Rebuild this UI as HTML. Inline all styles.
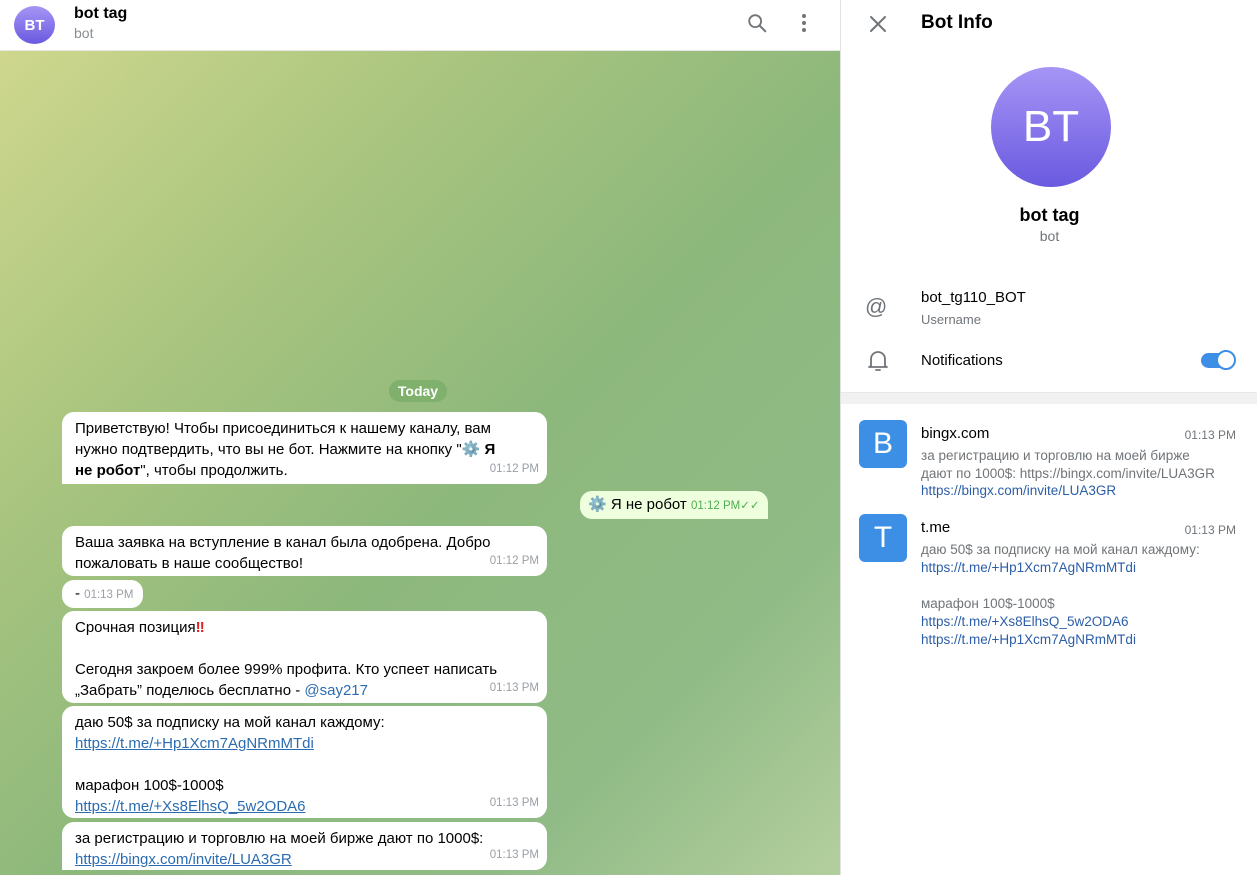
<!DOCTYPE html>
<html><head><meta charset="utf-8"><style>
*{margin:0;padding:0;box-sizing:border-box}
body{width:1257px;height:875px;overflow:hidden;font-family:"Liberation Sans","DejaVu Sans",sans-serif;position:relative;background:#fff;color:#000}
.chat{position:absolute;left:0;top:0;width:840px;height:875px;background:linear-gradient(135deg,#d3d98f 0%,#a9c57f 30%,#8db87c 55%,#90bb86 80%,#b4cf9e 100%);overflow:hidden}
.hdr{position:absolute;left:0;top:0;width:840px;height:51px;background:#fff;border-bottom:1px solid #e6e6e6}
.av{position:absolute;border-radius:50%;background:linear-gradient(#a695f5,#6a5ae0);color:#fff;font-weight:bold;display:flex;align-items:center;justify-content:center}
.b{position:absolute;left:62px;width:485px;background:#fff;border-radius:12px;padding:6px 22px 6px 13px;font-size:15px;line-height:21px}
.t{position:absolute;right:8px;bottom:4px;font-size:11.5px;color:#9aa0a6}
a{color:#2b6cb0;text-decoration:underline}
.rp{position:absolute;left:840px;top:0;width:417px;height:875px;background:#fff;border-left:1px solid #e2e2e2}
.g{color:#707579}
.lk{color:#2c5ea8}
</style></head><body>
<div class="chat">
<div class="hdr">
 <div class="av" style="left:14px;top:6px;width:41px;height:38px;font-size:15px">BT</div>
 <div style="position:absolute;left:74px;top:5px;font-size:16px;font-weight:bold">bot tag</div>
 <div style="position:absolute;left:74px;top:25px;font-size:14px;color:#8a8f93">bot</div>
 <svg style="position:absolute;left:746px;top:12px" width="22" height="22" viewBox="0 0 24 24"><circle cx="10" cy="10" r="6.5" fill="none" stroke="#707579" stroke-width="2"/><path d="M15 15l6 6" stroke="#707579" stroke-width="2.2" stroke-linecap="round"/></svg>
 <svg style="position:absolute;left:800px;top:12px" width="8" height="22" viewBox="0 0 8 22"><circle cx="4" cy="4" r="2" fill="#707579"/><circle cx="4" cy="11" r="2" fill="#707579"/><circle cx="4" cy="18" r="2" fill="#707579"/></svg>
</div>
<div style="position:absolute;left:389px;top:380px;width:58px;height:22px;border-radius:11px;background:#7fb06c;color:#fff;font-size:14px;font-weight:bold;text-align:center;line-height:22px">Today</div>

<div class="b" style="top:412px;height:72px;border-bottom-left-radius:0;padding-right:48px">Приветствую! Чтобы присоединиться к нашему каналу, вам нужно подтвердить, что вы не бот. Нажмите на кнопку "⚙️ <b>Я не робот</b>", чтобы продолжить.<span class="t">01:12 PM</span></div>

<div class="b" style="left:580px;width:188px;top:491px;height:28px;padding:3px 8px;background:#eeffde;border-bottom-right-radius:0">⚙️ Я не робот <span style="font-size:11.5px;color:#4fae4e">01:12 PM✓✓</span></div>

<div class="b" style="top:526px;height:50px">Ваша заявка на вступление в канал была одобрена. Добро пожаловать в наше сообщество!<span class="t">01:12 PM</span></div>

<div class="b" style="top:580px;width:81px;height:28px;padding:3px 8px 3px 13px">- <span style="font-size:11.5px;color:#9aa0a6">01:13 PM</span></div>

<div class="b" style="top:611px;height:92px">Срочная позиция<span style="color:#e02020;font-weight:bold">‼</span><br><br>Сегодня закроем более 999% профита. Кто успеет написать „Забрать” поделюсь бесплатно - <span style="color:#2b6cb0">@say217</span><span class="t">01:13 PM</span></div>

<div class="b" style="top:706px;height:112px">даю 50$ за подписку на мой канал каждому:<br><a>https://t.me/+Hp1Xcm7AgNRmMTdi</a><br><br>марафон 100$-1000$<br><a>https://t.me/+Xs8ElhsQ_5w2ODA6</a><span class="t">01:13 PM</span></div>

<div class="b" style="top:822px;height:48px;border-bottom-left-radius:0">за регистрацию и торговлю на моей бирже дают по 1000$:<br><a>https://bingx.com/invite/LUA3GR</a><span class="t">01:13 PM</span></div>
</div>

<div class="rp">
 <svg style="position:absolute;left:28px;top:15px" width="18" height="18" viewBox="0 0 18 18"><path d="M2 2L16 16M16 2L2 16" stroke="#707579" stroke-width="2" stroke-linecap="round"/></svg>
 <div style="position:absolute;left:80px;top:12px;font-size:19px;font-weight:bold">Bot Info</div>
 <div class="av" style="left:150px;top:67px;width:120px;height:120px;font-size:44px;font-weight:normal">BT</div>
 <div style="position:absolute;left:0;width:417px;top:205px;text-align:center;font-size:18px;font-weight:bold">bot tag</div>
 <div class="g" style="position:absolute;left:0;width:417px;top:228px;text-align:center;font-size:14px">bot</div>
 <div class="g" style="position:absolute;left:24px;top:294px;font-size:22px">@</div>
 <div style="position:absolute;left:80px;top:289px;font-size:15px">bot_tg110_BOT</div>
 <div class="g" style="position:absolute;left:80px;top:312px;font-size:13px">Username</div>
 <svg style="position:absolute;left:26px;top:349px" width="22" height="23" viewBox="0 0 22 23"><path d="M4 17V10a7 7 0 0 1 14 0v7l2 1H2z" fill="none" stroke="#707579" stroke-width="1.8" stroke-linejoin="round"/><path d="M9 21h4" stroke="#707579" stroke-width="1.8" stroke-linecap="round"/></svg>
 <div style="position:absolute;left:80px;top:352px;font-size:15px">Notifications</div>
 <div style="position:absolute;left:360px;top:353px;width:32px;height:15px;border-radius:8px;background:#3d8fe6"></div>
 <div style="position:absolute;left:375px;top:350px;width:20px;height:20px;border-radius:50%;background:#fff;border:2px solid #3d8fe6"></div>
 <div style="position:absolute;left:0;top:392px;width:417px;height:12px;background:#f1f1f1;border-top:1px solid #e8e8e8"></div>

 <div style="position:absolute;left:18px;top:420px;width:48px;height:48px;border-radius:6px;background:#3d8fe6;color:#fff;font-size:30px;text-align:center;line-height:48px">B</div>
 <div style="position:absolute;left:80px;top:425px;font-size:15px">bingx.com</div>
 <div class="g" style="position:absolute;right:21px;top:428px;font-size:12px">01:13 PM</div>
 <div style="position:absolute;left:80px;top:447px;font-size:13.5px;line-height:17.5px;white-space:nowrap"><span class="g">за регистрацию и торговлю на моей бирже<br>дают по 1000$: https://bingx.com/invite/LUA3GR</span><br><span class="lk">https://bingx.com/invite/LUA3GR</span></div>

 <div style="position:absolute;left:18px;top:514px;width:48px;height:48px;border-radius:6px;background:#3d8fe6;color:#fff;font-size:30px;text-align:center;line-height:48px">T</div>
 <div style="position:absolute;left:80px;top:519px;font-size:15px">t.me</div>
 <div class="g" style="position:absolute;right:21px;top:523px;font-size:12px">01:13 PM</div>
 <div style="position:absolute;left:80px;top:541px;font-size:13.5px;line-height:18px;width:330px"><span class="g">даю 50$ за подписку на мой канал каждому:</span><br><span class="lk">https://t.me/+Hp1Xcm7AgNRmMTdi</span><br><br><span class="g">марафон 100$-1000$</span><br><span class="lk">https://t.me/+Xs8ElhsQ_5w2ODA6</span><br><span class="lk">https://t.me/+Hp1Xcm7AgNRmMTdi</span></div>
</div>
</body></html>
